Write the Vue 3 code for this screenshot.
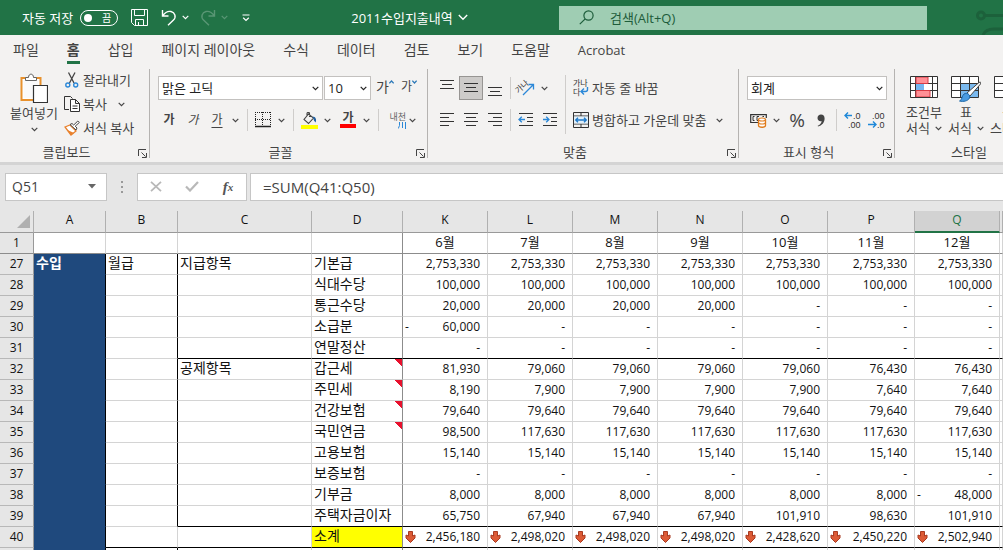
<script setup>
import { ref } from 'vue'

const autosave = ref(false)
const search = ref('')
const fontName = ref('맑은 고딕')
const fontSize = ref('10')
const numberFormat = ref('회계')
const cellName = ref('Q51')
const formula = ref('=SUM(Q41:Q50)')

const tabs = ['파일', '홈', '삽입', '페이지 레이아웃', '수식', '데이터', '검토', '보기', '도움말', 'Acrobat']
const columns = ['A', 'B', 'C', 'D', 'K', 'L', 'M', 'N', 'O', 'P', 'Q', '']
const months = ['6월', '7월', '8월', '9월', '10월', '11월', '12월']

const same = (value, count) => Array(count).fill(value)
const rows = [
  { n: 27, a: '수입', b: '월급', c: '지급항목', d: '기본급', v: same('2,753,330', 7) },
  { n: 28, d: '식대수당', v: same('100,000', 7) },
  { n: 29, d: '통근수당', v: [...same('20,000', 4), ...same('-', 3)] },
  { n: 30, d: '소급분', v: ['-60,000', ...same('-', 6)] },
  { n: 31, d: '연말정산', v: same('-', 7), rule: true },
  { n: 32, c: '공제항목', d: '갑근세', note: true, v: ['81,930', ...same('79,060', 4), ...same('76,430', 2)] },
  { n: 33, d: '주민세', note: true, v: ['8,190', ...same('7,900', 4), ...same('7,640', 2)] },
  { n: 34, d: '건강보험', note: true, v: same('79,640', 7) },
  { n: 35, d: '국민연금', note: true, v: ['98,500', ...same('117,630', 6)] },
  { n: 36, d: '고용보험', v: same('15,140', 7) },
  { n: 37, d: '보증보험', v: same('-', 7) },
  { n: 38, d: '기부금', v: [...same('8,000', 6), '-48,000'] },
  { n: 39, d: '주택자금이자', v: ['65,750', ...same('67,940', 3), '101,910', '98,630', '101,910'], rule: true },
  { n: 40, d: '소계', total: true, v: ['2,456,180', ...same('2,498,020', 3), '2,428,620', '2,450,220', '2,502,940'] },
  { n: 41, v: same('', 7) },
]
const isNegative = (v) => v.length > 1 && v.startsWith('-')
</script>

<template>
  <div class="app">
    <header class="titlebar">
      <div class="quick">
        <label class="autosave">
          <span>자동 저장</span>
          <span class="switch"><input v-model="autosave" type="checkbox"><span class="off">끔</span></span>
        </label>
        <button class="qbtn" aria-label="저장">
          <svg width="17" height="17" viewBox="0 0 17 17" fill="none" stroke="#fff"><path d="M.5 .5h16v16h-13l-3-3z M3.500 .5v6h10v-6 M4.500 16v-5.500h8v5.500 M7.500 16v-3" /></svg>
        </button>
        <button class="qbtn undo" aria-label="실행 취소">
          <svg width="16" height="17" viewBox="0 0 16 17" fill="none" stroke="#fff" stroke-width="1.4"><path d="M1.500 1v6h6 M1.500 7C4 3.500 7 1.800 10 2.500c4 1 5.500 5.500 2.500 8.500L7 16.300" /></svg>
        </button>
        <button class="qchev" aria-label="실행 취소 목록"><svg class="chev" viewBox="0 0 7 5"><path d="M.7 .9 3.500 3.700 6.300 .9" /></svg></button>
        <button class="qbtn dim" aria-label="다시 실행">
          <svg width="16" height="17" viewBox="0 0 16 17" fill="none" stroke="#fff" stroke-width="1.4"><path d="M14.500 1v6h-6 M14.500 7C12 3.500 9 1.800 6 2.500c-4 1-5.500 5.500-2.500 8.500L9 16.300" /></svg>
        </button>
        <button class="qchev dim" aria-label="다시 실행 목록"><svg class="chev" viewBox="0 0 7 5"><path d="M.7 .9 3.500 3.700 6.300 .9" /></svg></button>
        <button class="qchev custom" aria-label="빠른 실행 도구 모음 사용자 지정"><svg width="8" height="8" viewBox="0 0 8 8" fill="none" stroke="#fff" stroke-width="1.200"><path d="M.5 1h7 M1.200 3.800 4 6.500 6.800 3.800" /></svg></button>
      </div>
      <button class="doc">2011수입지출내역<svg width="10" height="7" viewBox="0 0 10 7" fill="none" stroke="#fff" stroke-width="1.400"><path d="M.8 1 5 5.200 9.200 1" /></svg></button>
      <label class="search">
        <svg width="15" height="15" viewBox="0 0 15 15" fill="none" stroke="#1d5c3a" stroke-width="1.200"><circle cx="9.500" cy="5.500" r="4.600" /><path d="M6.200 8.800.8 14.200" /></svg>
        <input v-model="search" type="text" placeholder="검색(Alt+Q)" aria-label="검색">
      </label>
      <div class="circuit">
        <svg width="27" height="35" viewBox="0 0 27 35" fill="none" stroke="#1c613b" stroke-width="3"><circle cx="5" cy="15.500" r="3.500" /><path d="M9 15.500h18 M7 35c2-5 6-6 11-6h9" /></svg>
      </div>
    </header>

    <nav class="tabs">
      <button v-for="t in tabs" :key="t" :class="{ active: t === '홈' }">{{ t }}</button>
    </nav>

    <div class="ribbon">
      <section class="group clipboard">
        <div class="body">
          <button class="paste">
            <svg width="28" height="31" viewBox="0 0 28 31" fill="none"><path d="M1.500 5h19v22h-19z" fill="#fff" stroke="#e8912d" stroke-width="2" /><path d="M3.500 7h15v18h-15z" fill="#fafafa" /><path d="M5.500 7.500v-3h3c0-4.500 5-4.500 5 0h3v3z" fill="#fff" stroke="#666" /><path d="M13.500 12.500h14v17h-14z" fill="#fff" stroke="#333" stroke-width="1.200" /></svg>
            <span>붙여넣기</span>
            <svg class="chev" viewBox="0 0 7 5"><path d="M.7 .9 3.500 3.700 6.300 .9" /></svg>
          </button>
          <div class="stack">
            <button class="line">
              <svg width="16" height="16" viewBox="0 0 16 16" fill="none"><path d="M4.500 .5 10 11 M11 .5 5.500 11" stroke="#444" stroke-width="1.300" /><circle cx="3.800" cy="13" r="2" stroke="#2b88d8" stroke-width="1.400" /><circle cx="11.700" cy="13" r="2" stroke="#2b88d8" stroke-width="1.400" /></svg>
              잘라내기
            </button>
            <button class="line">
              <svg width="16" height="16" viewBox="0 0 16 16" fill="none" stroke="#333"><path d="M5 13.500H.5V.5h6l2 2" /><path d="M6.500 3.500h5l4 4v8h-9z M11.500 3.500v4h4 M8.500 10h5 M8.500 12.500h5" fill="#fff" /></svg>
              복사
              <svg class="chev copychev" viewBox="0 0 7 5"><path d="M.7 .9 3.500 3.700 6.300 .9" /></svg>
            </button>
            <button class="line">
              <svg width="16" height="16" viewBox="0 0 16 16"><path d="M1 7 6 5l6 6-5 4z" fill="#fff" stroke="#e8812d" stroke-width="1.300" /><path d="M2.500 9.500 10 13l-3 2z" fill="#e8812d" /><path d="m6 4.500 6 5.500 1-2-1.800-1.800L15.300 2.500 13.800 1 9.700 5 8 3.500z" fill="#fff" stroke="#444" /></svg>
              서식 복사
            </button>
          </div>
        </div>
        <footer>클립보드<button class="launch" aria-label="클립보드 옵션"><svg width="9" height="9" viewBox="0 0 9 9" fill="none" stroke="#444"><path d="M.5 7V.5H8 M3.500 3.500l4 4 M8.500 4v4.500H4" /></svg></button></footer>
      </section>

      <section class="group font">
        <div class="body rows">
          <div class="row">
            <span class="field fontname"><select v-model="fontName" aria-label="글꼴"><option>맑은 고딕</option></select><svg class="chev" viewBox="0 0 7 5"><path d="M.7 .9 3.500 3.700 6.300 .9" /></svg></span>
            <span class="field size"><select v-model="fontSize" aria-label="글꼴 크기"><option>10</option></select><svg class="chev" viewBox="0 0 7 5"><path d="M.7 .9 3.500 3.700 6.300 .9" /></svg></span>
            <button class="ib step big" aria-label="글꼴 크기 크게"><span>가</span><svg width="5" height="4" viewBox="0 0 5 4" fill="none" stroke="#2b78b8" stroke-width="1.300"><path d="M.3 3.300 2.500 1 4.700 3.300" /></svg></button>
            <button class="ib step" aria-label="글꼴 크기 작게"><span>가</span><svg width="5" height="4" viewBox="0 0 5 4" fill="none" stroke="#2b78b8" stroke-width="1.300"><path d="M.3 .7 2.500 3 4.700 .7" /></svg></button>
          </div>
          <div class="row">
            <button class="ib glyph bold">가</button>
            <button class="ib glyph italic">가</button>
            <button class="ib glyph under">가</button>
            <button class="cb" aria-label="밑줄 옵션"><svg class="chev" viewBox="0 0 7 5"><path d="M.7 .9 3.500 3.700 6.300 .9" /></svg></button>
            <i class="sep wide"></i>
            <button class="ib" aria-label="테두리"><svg width="16" height="16" viewBox="0 0 16 16" fill="none" stroke="#222"><path d="M0 .5h16 M.5 0v14 M15.500 0v14 M7.500 0v14 M0 7.500h16" stroke-dasharray="1 1" /><path d="M0 14.500h16" stroke-width="1.500" /></svg></button>
            <button class="cb" aria-label="테두리 옵션"><svg class="chev" viewBox="0 0 7 5"><path d="M.7 .9 3.500 3.700 6.300 .9" /></svg></button>
            <i class="sep wide"></i>
            <button class="ib" aria-label="채우기 색"><svg width="17" height="17" viewBox="0 0 17 17" fill="none"><path d="M7.500 2 3 7.500l4.500 4L12.500 6z M6 4V1.500c0-1.500 2.500-1.500 2.500 0V5" stroke="#444" stroke-width="1.100" /><path d="M11.500 4.500c3 0 4.500 3 3 6-1-1.500-2-2-2-4z" fill="#1e5fa0" /><path d="M0 13h17v4H0z" fill="#ff0" /></svg></button>
            <button class="cb" aria-label="채우기 색 옵션"><svg class="chev" viewBox="0 0 7 5"><path d="M.7 .9 3.500 3.700 6.300 .9" /></svg></button>
            <button class="ib fontcolor"><span>가</span></button>
            <button class="cb" aria-label="글꼴 색 옵션"><svg class="chev" viewBox="0 0 7 5"><path d="M.7 .9 3.500 3.700 6.300 .9" /></svg></button>
            <i class="sep wide"></i>
            <button class="ib phonetic"><span>내천</span><svg width="8" height="7" viewBox="0 0 8 7" fill="none" stroke="#2b88d8"><path d="M1.500 0v3.500L.3 6.500 M4.500 0v6 M7.500 0v7" /></svg></button>
            <button class="cb" aria-label="윗주 옵션"><svg class="chev" viewBox="0 0 7 5"><path d="M.7 .9 3.500 3.700 6.300 .9" /></svg></button>
          </div>
        </div>
        <footer>글꼴<button class="launch" aria-label="글꼴 옵션"><svg width="9" height="9" viewBox="0 0 9 9" fill="none" stroke="#444"><path d="M.5 7V.5H8 M3.500 3.500l4 4 M8.500 4v4.500H4" /></svg></button></footer>
      </section>

      <section class="group align">
        <div class="body">
          <div class="rows">
            <div class="row">
              <button class="ib" aria-label="위쪽 맞춤"><svg class="al" viewBox="0 0 14 16"><path d="M0 .5h14 M2 4.500h10 M0 8.500h14" /></svg></button>
              <button class="ib on" aria-label="가운데 맞춤"><svg class="al" viewBox="0 0 14 16"><path d="M0 3.500h14 M2 7.500h10 M0 11.500h14" /></svg></button>
              <button class="ib" aria-label="아래쪽 맞춤"><svg class="al" viewBox="0 0 14 16"><path d="M0 7.500h14 M2 11.500h10 M0 15.500h14" /></svg></button>
              <i class="sep"></i>
              <button class="ib" aria-label="방향"><svg class="mini" width="17" height="16" viewBox="0 0 17 16" fill="none"><text x="-2" y="10" transform="rotate(-42 4 9)">가나</text><path d="M5 15 15 5 M10.500 4.500H15.500V9.500" stroke="#2b88d8" stroke-width="1.300" /></svg></button>
              <button class="cb" aria-label="방향 옵션"><svg class="chev" viewBox="0 0 7 5"><path d="M.7 .9 3.500 3.700 6.300 .9" /></svg></button>
            </div>
            <div class="row">
              <button class="ib" aria-label="왼쪽 맞춤"><svg class="al" viewBox="0 0 14 16"><path d="M0 1.500h14 M0 5.500h9 M0 9.500h14 M0 13.500h9" /></svg></button>
              <button class="ib" aria-label="가로 가운데 맞춤"><svg class="al" viewBox="0 0 14 16"><path d="M0 1.500h14 M2 5.500h10 M0 9.500h14 M2 13.500h10" /></svg></button>
              <button class="ib" aria-label="오른쪽 맞춤"><svg class="al" viewBox="0 0 14 16"><path d="M0 1.500h14 M5 5.500h9 M0 9.500h14 M5 13.500h9" /></svg></button>
              <i class="sep"></i>
              <button class="ib" aria-label="내어쓰기"><svg class="al" viewBox="0 0 14 16"><path d="M0 1.500h14 M8 5.500h6 M8 9.500h6 M0 13.500h14" /><path class="blue" d="M0 7.500h6 M2.800 4.700 0 7.500l2.800 2.800" /></svg></button>
              <button class="ib" aria-label="들여쓰기"><svg class="al" viewBox="0 0 14 16"><path d="M0 1.500h14 M8 5.500h6 M8 9.500h6 M0 13.500h14" /><path class="blue" d="M0 7.500h6 M3.200 4.700 6 7.500l-2.800 2.800" /></svg></button>
            </div>
          </div>
          <i class="sep tall"></i>
          <div class="rows cellopts">
            <button class="line">
              <svg class="mini" width="16" height="18" viewBox="0 0 16 18" fill="none"><text x="0" y="7">가나</text><text x="0" y="16">다</text><path d="M14.500 8v2.500c0 1.500-1 2-2 2H8.500 M11 9.500 8 12.500l3 3" stroke="#2b88d8" stroke-width="1.400" /></svg>
              자동 줄 바꿈
            </button>
            <button class="line">
              <svg width="16" height="16" viewBox="0 0 16 16" fill="none"><path d="M.5 .5h15v15H.5z M.5 4h15 M.5 12h15 M8 .5V4 M8 12v3.500" stroke="#333" /><path d="M1 4.500h14v7H1z" fill="#e1f0fb" /><path d="M3 8h10 M5 5.700 2.700 8 5 10.300 M11 5.700 13.300 8 11 10.300" stroke="#1e78c8" stroke-width="1.300" /></svg>
              병합하고 가운데 맞춤
              <svg class="chev mergechev" viewBox="0 0 7 5"><path d="M.7 .9 3.500 3.700 6.300 .9" /></svg>
            </button>
          </div>
        </div>
        <footer>맞춤<button class="launch" aria-label="맞춤 옵션"><svg width="9" height="9" viewBox="0 0 9 9" fill="none" stroke="#444"><path d="M.5 7V.5H8 M3.500 3.500l4 4 M8.500 4v4.500H4" /></svg></button></footer>
      </section>

      <section class="group number">
        <div class="body rows">
          <div class="row">
            <span class="field format"><select v-model="numberFormat" aria-label="표시 형식"><option>회계</option></select><svg class="chev" viewBox="0 0 7 5"><path d="M.7 .9 3.500 3.700 6.300 .9" /></svg></span>
          </div>
          <div class="row">
            <button class="ib" aria-label="회계 표시 형식"><svg width="17" height="16" viewBox="0 0 17 16" fill="none"><path d="M8 10.500H.7V2.700h15.600V6" stroke="#333" stroke-width="1.200" /><path d="M4.500 4.500H3v4h1.500 M9 4.500H7v4h1 M12.500 4.500H14" stroke="#333" /><path d="M8.500 7.500v6c0 2.300 7 2.300 7 0v-6" fill="#fff" stroke="#e07b1a" stroke-width="1.300" /><ellipse cx="12" cy="7.500" rx="3.500" ry="1.500" fill="#fff" stroke="#e07b1a" stroke-width="1.200" /><path d="M8.500 10.500c0 2 7 2 7 0" stroke="#e07b1a" stroke-width="1.200" /></svg></button>
            <button class="cb" aria-label="회계 옵션"><svg class="chev" viewBox="0 0 7 5"><path d="M.7 .9 3.500 3.700 6.300 .9" /></svg></button>
            <button class="ib percent">%</button>
            <button class="ib" aria-label="쉼표 스타일"><svg width="8" height="13" viewBox="0 0 8 13"><path d="M4 .5c2.300 0 3.600 1.600 3.600 4C7.600 8.500 5 11.500 1 12.500l-.3-.8C3 10.800 4.500 9 4.700 7.200 2.200 7.800.5 6.200.5 4 .5 2 2 .5 4 .5z" fill="#444" /></svg></button>
            <i class="sep"></i>
            <button class="ib" aria-label="자릿수 늘림"><svg class="dec" width="17" height="18" viewBox="0 0 17 18" fill="none"><text x="9" y="8">.0</text><text x="4" y="17">.00</text><path d="M1 4.500h7 M4 1.500 1 4.500l3 3" stroke="#1e88d8" stroke-width="1.400" /></svg></button>
            <button class="ib" aria-label="자릿수 줄임"><svg class="dec" width="17" height="18" viewBox="0 0 17 18" fill="none"><text x="4" y="8">.00</text><text x="9" y="17">.0</text><path d="M0 13.500h8 M5 10.500l3 3-3 3" stroke="#1e88d8" stroke-width="1.400" /></svg></button>
          </div>
        </div>
        <footer>표시 형식<button class="launch" aria-label="표시 형식 옵션"><svg width="9" height="9" viewBox="0 0 9 9" fill="none" stroke="#444"><path d="M.5 7V.5H8 M3.500 3.500l4 4 M8.500 4v4.500H4" /></svg></button></footer>
      </section>

      <section class="group styles">
        <div class="body">
          <button class="tile">
            <svg width="28" height="28" viewBox="0 0 28 28" fill="none"><path d="M.5 2.500h27v21H.5z" fill="#fff" /><path d="M6 3h12v6.500H6z M6 16.500h14V23H6z" fill="#ff9096" /><path d="M6 9.500h8v7H6z" fill="#73b5f0" /><path d="M5.500 3v20 M22.500 3v20 M.5 9.500h27 M.5 16.500h27" stroke="#333" /><path d="M18 3v6.500H6V3z M6 16.500h14V23H6z" stroke="#d83b45" /><path d="M.5 2.500h27v21H.5z" stroke="#333" /></svg>
            <span>조건부</span>
            <span>서식<svg class="chev" viewBox="0 0 7 5"><path d="M.7 .9 3.500 3.700 6.300 .9" /></svg></span>
          </button>
          <button class="tile">
            <svg width="30" height="28" viewBox="0 0 30 28" fill="none"><path d="M.5 2.500h27v21H.5z" fill="#fff" /><path d="M9.500 9.500h18v14h-18z" fill="#7ab9ee" /><path d="M.5 2.500h27v21H.5z M9.500 2.500v21 M18.500 2.500v21 M.5 9.500h27 M.5 16.500h27" stroke="#333" /><path d="M16 19 28 8.500c1.500-1 2.500 0 1.500 1.500L19 22z" fill="#fff" stroke="#444" /><path d="M8.500 27c3-1 2-5 4.500-7 3-2 7 1 5.500 4-1.500 3-6 4-10 3z" fill="#4a9be0" stroke="#1e68a8" /></svg>
            <span>표</span>
            <span>서식<svg class="chev" viewBox="0 0 7 5"><path d="M.7 .9 3.500 3.700 6.300 .9" /></svg></span>
          </button>
          <button class="tile">
            <svg width="28" height="28" viewBox="0 0 28 28" fill="none"><path d="M.5 2.500h27v21H.5z M.5 9.500h27 M.5 16.500h27 M9.500 2.500v21" fill="#fff" stroke="#333" /></svg>
            <span>셀</span>
            <span>스타일</span>
          </button>
        </div>
        <footer>스타일</footer>
      </section>
    </div>

    <div class="formulabar">
      <div class="namebox">
        <input v-model="cellName" type="text" aria-label="이름 상자">
        <button aria-label="이름 목록"><svg width="8" height="5" viewBox="0 0 8 5"><path d="M0 0h8L4 4.500z" fill="#666" /></svg></button>
      </div>
      <svg class="dots" width="2" height="12" viewBox="0 0 2 12" fill="#999"><path d="M0 0h2v2H0z M0 5h2v2H0z M0 10h2v2H0z" /></svg>
      <div class="entry">
        <button aria-label="취소"><svg width="12" height="11" viewBox="0 0 12 11" fill="none" stroke="#b8b8b8" stroke-width="1.800"><path d="M1 .8 11 10.200 M11 .8 1 10.200" /></svg></button>
        <button aria-label="입력"><svg width="14" height="11" viewBox="0 0 14 11" fill="none" stroke="#b8b8b8" stroke-width="2.200"><path d="M1 5.500 5 9.500 13 1" /></svg></button>
        <button class="fx" aria-label="함수 삽입">f<sub>x</sub></button>
      </div>
      <input v-model="formula" class="formula" type="text" aria-label="수식 입력줄">
    </div>

    <main class="sheet">
      <table>
        <colgroup>
          <col class="w-head"><col class="w-ab"><col class="w-ab"><col class="w-c"><col class="w-d">
          <col v-for="i in 5" :key="i" class="w-m"><col class="w-p"><col class="w-m"><col>
        </colgroup>
        <thead>
          <tr>
            <th class="corner"><svg width="13" height="13" viewBox="0 0 13 13"><path d="M13 0v13H0z" fill="#b0b0b0" /></svg></th>
            <th v-for="c in columns" :key="c" :class="{ sel: c === 'Q' }">{{ c }}</th>
          </tr>
        </thead>
        <tbody>
          <tr class="frozen">
            <th>1</th>
            <td></td><td></td><td></td><td class="d"></td>
            <td v-for="m in months" :key="m" class="month">{{ m }}</td>
            <td></td>
          </tr>
          <tr v-for="r in rows" :key="r.n" :class="{ rule: r.rule, total: r.total }">
            <th>{{ r.n }}</th>
            <td class="a">{{ r.a }}</td>
            <td class="b">{{ r.b }}</td>
            <td class="c">{{ r.c }}</td>
            <td class="d" :class="{ note: r.note }">{{ r.d }}</td>
            <td v-for="(v, i) in r.v" :key="i" class="num">
              <div class="val">
                <svg v-if="r.total" width="11" height="12" viewBox="0 0 11 12"><path d="M3.500 .5h4v4.500l2.500-1v3L5.500 11.500 1 7V4l2.500 1z" fill="#dc5a35" stroke="#a83a20" /></svg>
                <span v-else-if="isNegative(v)">-</span>
                <span class="amount">{{ isNegative(v) ? v.slice(1) : v }}</span>
              </div>
            </td>
            <td></td>
          </tr>
        </tbody>
      </table>
    </main>
  </div>
</template>

<style>
html, body { margin: 0; overflow: hidden; }
</style>

<style scoped>
* { box-sizing: border-box; }
.app {
  display: flex; flex-direction: column; height: 100vh; overflow: hidden;
  background: #e6e6e6; color: #444; font: 13px/16px "Open Sans", "Noto Sans CJK KR", sans-serif;
}
button, input, select { font: inherit; color: inherit; margin: 0; padding: 0; border: 0; background: none; outline: 0; }
button { display: inline-flex; align-items: center; justify-content: center; white-space: nowrap; }
svg { flex: none; display: block; }
.chev { width: 7px; height: 5px; fill: none; stroke: #444; stroke-width: 1.2; }

.titlebar { display: flex; align-items: center; flex: none; height: 35px; background: #217346; color: #fff; }
.quick { display: flex; align-items: center; flex: none; width: 260px; padding-left: 22px; }
.autosave { display: flex; align-items: center; gap: 7px; margin-right: 13px; white-space: nowrap; }
.switch { position: relative; display: flex; }
.switch input { appearance: none; width: 38px; height: 16px; border: 1px solid #fff; border-radius: 8px; }
.switch input::before { content: ""; display: block; width: 8px; height: 8px; margin: 3px; border-radius: 50%; background: #fff; }
.off { position: absolute; right: 7px; top: 0; font-size: 10px; }
.titlebar .chev { stroke: #fff; }
.undo { margin-left: 13px; }
.qchev { width: 16px; height: 20px; }
.dim { opacity: .25; }
.qbtn.dim { margin-left: 7px; }
.qchev.custom { margin-left: 6px; }
.doc { flex: 1; gap: 5px; min-width: 0; }
.search { display: flex; align-items: center; gap: 16px; flex: 0 1 368px; height: 24px; padding-left: 20px; background: #9fcdb3; color: #1d5c3a; }
.search input { flex: 1; min-width: 0; }
.search input::placeholder { color: #1d5c3a; opacity: 1; }
.circuit { flex: none; width: 76px; display: flex; justify-content: flex-end; }

.tabs { display: flex; flex: none; gap: 28px; height: 33px; padding: 4px 13px 0; background: #f3f2f1; }
.tabs button { height: 25px; font-size: 14px; border-bottom: 3px solid transparent; }
.tabs .active { border-color: #217346; font-weight: 700; }
.tabs button:last-child { font-size: 13px; }

.ribbon { display: flex; flex: none; height: 94px; background: #f3f2f1; overflow: hidden; }
.group { position: relative; display: flex; flex-direction: column; flex: none; height: 90px; }
.group::after { content: ""; position: absolute; right: 0; top: 1px; bottom: 0; width: 1px; background: #b5b3b1; }
.body { display: flex; flex: 1; }
.group footer { display: flex; justify-content: center; height: 16px; padding-right: 2px; margin-bottom: -2px; }
.launch { position: absolute; right: 3px; bottom: 0; width: 9px; height: 9px; }
.clipboard { width: 150px; }
.clipboard footer, .font footer, .align footer, .number footer { padding-right: 17px; }
.font { width: 278px; }
.align { width: 311px; }
.number { width: 156px; }
.styles { width: 150px; }
.paste { flex-direction: column; justify-content: flex-start; width: 54px; padding-top: 5px; margin-left: 7px; gap: 1px; }
.paste .chev { margin-top: 5px; }
.stack { display: flex; flex-direction: column; margin-left: 3px; }
.line { justify-content: flex-start; height: 24px; gap: 3px; }
.copychev { margin-left: 8px; }
.mergechev { margin-left: 7px; }
.rows { display: flex; flex-direction: column; gap: 8px; padding-top: 8px; }
.cellopts { padding-left: 7px; }
.row { display: flex; align-items: center; height: 24px; }
.font .rows { padding-left: 7px; }
.align .body { padding-left: 7px; }
.number .rows { padding-left: 7px; }
.field { position: relative; display: flex; align-items: center; height: 24px; margin-left: 1px; border: 1px solid #c3c1bf; background: #fff; color: #222; }
.field select { appearance: none; width: 100%; height: 100%; padding-left: 3px; }
.field .chev { position: absolute; right: 3px; pointer-events: none; stroke: #222; }
.fontname { width: 165px; }
.size { width: 47px; margin-right: 2px; }
.format { width: 140px; }
.ib { flex: none; width: 24px; height: 24px; }
.cb { flex: none; width: 12px; height: 24px; }
.on { background: #cdcbc9; border: 1px solid #979593; }
.sep { flex: none; width: 1px; height: 22px; margin: 0 3px; background: #cfcdcb; }
.sep.wide { margin-left: 6px; }
.sep.tall { height: 59px; margin: 7px 0 0 3px; }
.step { align-items: flex-start; padding-top: 3px; font-size: 12px; }
.step.big { font-size: 14px; }
.step svg { margin-top: 1px; }
.glyph { font-size: 12px; }
.bold { font-weight: 700; }
.italic { font-style: italic; }
.under { text-decoration: underline; text-underline-offset: 3px; }
.fontcolor { margin-left: 3px; }
.fontcolor span { width: 16px; height: 16px; line-height: 11px; font-weight: 700; font-size: 12px; border-bottom: 4px solid #f00; }
.phonetic { flex-direction: column; align-items: flex-end; font-size: 9px; line-height: 10px; color: #666; }
.al { width: 14px; height: 16px; fill: none; stroke: #333; overflow: visible; }
.al .blue { stroke: #2b88d8; stroke-width: 1.3; }
.percent { font-size: 19px; margin-left: 3px; }
.mini, .dec { overflow: visible; }
.mini text { font-family: "Noto Sans CJK KR", sans-serif; font-size: 8px; fill: #333; }
.dec text { font-family: "Liberation Sans", sans-serif; font-size: 9px; fill: #333; }
.styles .body { padding-left: 8px; }
.tile { flex: none; flex-direction: column; justify-content: flex-start; width: 42px; padding-top: 6px; }
.tile > svg { margin-bottom: 2px; }
.tile span { display: flex; align-items: center; gap: 5px; }

.formulabar { display: flex; align-items: center; flex: none; height: 49px; border-top: 3px solid #d4d4d4; padding: 0 0 3px 5px; }
.namebox, .entry, .formula { height: 28px; background: #fff; border: 1px solid #c6c6c6; }
.namebox { display: flex; width: 102px; font-size: 14px; }
.namebox input { flex: 1; min-width: 0; padding-left: 6px; }
.namebox button { width: 28px; }
.dots { margin: 0 14px; }
.entry { display: flex; flex: none; width: 110px; margin-right: 3px; }
.entry button { flex: 1; }
.fx { font: italic 700 15px/18px "Liberation Serif", serif; color: #555; }
.fx sub { font-size: 11px; }
.formula { flex: 1; min-width: 0; border-right: 0; padding-left: 12px; font-size: 15px; }

.sheet { flex: 1; min-height: 0; overflow: hidden; background: #fff; }
table { width: 100%; table-layout: fixed; border-collapse: separate; border-spacing: 0; color: #111; }
.w-head { width: 34px; }
.w-ab { width: 72px; }
.w-c { width: 134px; }
.w-d { width: 91px; }
.w-m { width: 85px; }
.w-p { width: 87px; }
th, td { height: 21px; padding: 0; line-height: 18px; border-right: 1px solid #d4d4d4; border-bottom: 1px solid #d4d4d4; white-space: nowrap; }
th { background: #e6e6e6; font-weight: 400; font-size: 12px; text-align: center; border-right-color: #999; border-bottom-color: #b8b8b8; }
thead th { height: 22px; padding-bottom: 3px; border-right-color: #b0b0b0; border-bottom-color: #999; }
thead .sel { background: #d2d2d2; color: #217346; border-bottom: 2px solid #217346; padding-bottom: 2px; }
thead .corner { padding-bottom: 0; }
.corner svg { margin-left: 17px; }
td { font-family: "Noto Sans CJK KR", sans-serif; font-size: 14px; line-height: 16px; padding-left: 2px; vertical-align: top; }
.d { border-right-color: #8c8c8c; }
.frozen td, .frozen th { border-bottom-color: #8c8c8c; }
.month { font-family: "Open Sans", "Noto Sans CJK KR", sans-serif; font-size: 13px; line-height: 18px; text-align: center; padding: 0; }
.a { background: #1f497d; color: #fff; font-weight: 700; border-right-color: #000; border-bottom-color: #1f497d; }
.b { border-right-color: #000; }
.total .b { border-right-color: #d4d4d4; }
.rule td:nth-child(n+4), .total td:nth-child(n+3) { border-bottom-color: #000; }
.total .d { background: #ff0; }
.note { background: linear-gradient(225deg, #e8112d 5px, transparent 5px) no-repeat; }
.num { font-family: "Open Sans", sans-serif; font-size: 12px; }
.val { display: flex; align-items: center; height: 20px; padding-right: 7px; }
.amount { margin-left: auto; }
</style>
